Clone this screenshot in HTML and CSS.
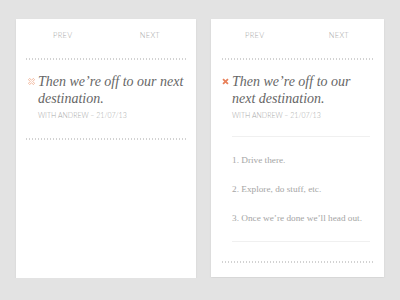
FILE: index.html
```html
<!DOCTYPE html>
<html lang="en">
<head>
<meta charset="UTF-8" />
<meta name="viewport" content="width=device-width, initial-scale=1" />
<title>Trip entries</title>
<link rel="stylesheet" href="styles.css">
</head>
<body>
<div class="cards">

  <div class="card card-short">
    <div class="pager">
      <span>Prev</span>
      <span>Next</span>
    </div>
    <div class="dots"></div>
    <div class="entry">
      <svg class="mark" viewBox="0 0 8 8" width="7" height="7">
        <polygon class="mark-open" transform="rotate(45 4 4)" points="3,0 5,0 5,3 8,3 8,5 5,5 5,8 3,8 3,5 0,5 0,3 3,3" />
      </svg>
      <div>
        <h2 class="title">Then we’re off to our next destination.</h2>
        <p class="meta">With Andrew – 21/07/13</p>
      </div>
    </div>
    <div class="dots dots-end"></div>
  </div>

  <div class="card card-open">
    <div class="pager">
      <span>Prev</span>
      <span>Next</span>
    </div>
    <div class="dots"></div>
    <div class="entry">
      <svg class="mark" viewBox="0 0 8 8" width="7" height="7">
        <polygon class="mark-solid" transform="rotate(45 4 4)" points="3,0 5,0 5,3 8,3 8,5 5,5 5,8 3,8 3,5 0,5 0,3 3,3" />
      </svg>
      <div>
        <h2 class="title">Then we’re off to our next destination.</h2>
        <p class="meta">With Andrew – 21/07/13</p>
      </div>
    </div>
    <ol class="steps">
      <li>1. Drive there.</li>
      <li>2. Explore, do stuff, etc.</li>
      <li>3. Once we’re done we’ll head out.</li>
    </ol>
    <div class="dots"></div>
  </div>

</div>
</body>
</html>
```

FILE: styles.css
```css
* {
  box-sizing: border-box;
}
body, html {
  margin: 0; padding: 0;
  background: #e3e3e3;
  font-family: Lato, 'Open Sans', sans-serif;
}
.cards {
  display: flex;
  align-items: flex-start;
  gap: 15px;
  padding: 19px 0 0 16px;
}
.card {
  background: #fff;
  padding: 0 9px 0 10px;
  box-shadow: 0 1px 2px rgba(0,0,0,0.08);
}
.card-short {
  width: 180px;
  height: 259px;
}
.card-open {
  width: 173px;
  height: 258px;
  padding-left: 11px;
}
.pager {
  display: flex;
  justify-content: space-between;
  padding: 13px 27px 0 27px;
  margin-bottom: 18px;
  font-size: 7.5px;
  line-height: 8px;
  font-weight: 300;
  letter-spacing: 0.3px;
  text-transform: uppercase;
  color: #a8a8a8;
}
.card-open .pager {
  padding: 13px 26px 0 23px;
}
.dots {
  height: 2px;
  background: repeating-linear-gradient(90deg, #d2d2d2 0 1px, transparent 1px 3px);
}
.entry {
  display: flex;
  gap: 3px;
  padding-left: 2px;
  margin-top: 13px;
}
.card-open .entry {
  padding-left: 0;
}
.mark {
  flex: none;
  margin-top: 5px;
}
.mark-open {
  fill: #fff;
  stroke: #eda27f;
  stroke-width: 0.8;
}
.mark-solid {
  fill: #e8805a;
}
.title {
  margin: 0;
  font-family: 'Liberation Serif', serif;
  font-style: italic;
  font-weight: normal;
  font-size: 14px;
  line-height: 17px;
  color: #666;
}
.meta {
  margin: 3px 0 0;
  font-size: 7px;
  line-height: 10px;
  font-weight: 300;
  text-transform: uppercase;
  color: #a8a8a8;
}
.dots-end {
  margin-top: 18px;
}
.steps {
  list-style: none;
  margin: 16px 5px 19px 10px;
  padding: 17px 0;
  border-top: 1px solid #f0f0f0;
  border-bottom: 1px solid #f0f0f0;
  font-family: 'Liberation Serif', serif;
  font-size: 9.25px;
  line-height: 12px;
  color: #a5a5a5;
}
.steps li + li {
  margin-top: 17px;
}
```
